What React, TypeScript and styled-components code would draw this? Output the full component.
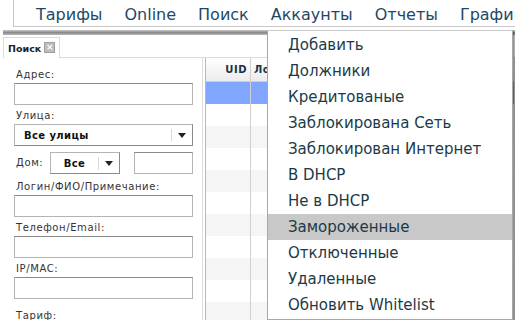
import React from "react";
import styled, { createGlobalStyle } from "styled-components";

const MENU = ["Тарифы", "Online", "Поиск", "Аккаунты", "Отчеты", "Графики"];

const ACCOUNT_ITEMS = [
  "Добавить",
  "Должники",
  "Кредитованые",
  "Заблокирована Сеть",
  "Заблокирован Интернет",
  "В DHCP",
  "Не в DHCP",
  "Замороженные",
  "Отключенные",
  "Удаленные",
  "Обновить Whitelist",
];
const ACTIVE_ITEM = "Замороженные";

const ROWS = 11;

const GlobalStyle = createGlobalStyle`
  body {
    margin: 0;
    background: #fff;
    font-family: "DejaVu Sans", Verdana, sans-serif;
    overflow: hidden;
  }
`;

function App() {
  return (
    <Page>
      <GlobalStyle />
      <Header>
        <TopBar>
          {MENU.map((item) => (
            <TopItem key={item}>{item}</TopItem>
          ))}
        </TopBar>
        <Shade />
      </Header>

      <TabStrip>
        <Tab>
          Поиск
          <CloseBox>×</CloseBox>
        </Tab>
        <TabLine />
      </TabStrip>

      <Body>
        <SearchPanel>
          <Label>Адрес:</Label>
          <Input />
          <Label>Улица:</Label>
          <Select $wide>
            <SelectText>Все улицы</SelectText>
            <Arrow />
          </Select>
          <HouseRow>
            <Label $inline>Дом:</Label>
            <Select>
              <SelectText $center>Все</SelectText>
              <Arrow />
            </Select>
            <SmallInput />
          </HouseRow>
          <Label>Логин/ФИО/Примечание:</Label>
          <Input />
          <Label>Телефон/Email:</Label>
          <Input />
          <Label>IP/MAC:</Label>
          <Input />
          <Label $gap>Тариф:</Label>
        </SearchPanel>

        <Grid>
          <HeadRow>
            <HeadCell>UID</HeadCell>
            <HeadCell>Логин</HeadCell>
          </HeadRow>
          {Array.from({ length: ROWS }).map((_, i) => (
            <Row key={i} $selected={i === 0} $odd={i % 2 === 0}>
              <Cell />
              <Cell />
            </Row>
          ))}
        </Grid>
      </Body>

      <Dropdown>
        {ACCOUNT_ITEMS.map((item) => (
          <DropItem key={item} $active={item === ACTIVE_ITEM}>
            {item}
          </DropItem>
        ))}
      </Dropdown>
    </Page>
  );
}

export default App;

const Page = styled.div`
  position: relative;
  width: 515px;
  height: 320px;
  overflow: hidden;
`;

const Header = styled.div`
  display: flex;
  flex-direction: column;
`;

const TopBar = styled.div`
  display: flex;
  gap: 22px;
  height: 26px;
  margin-left: 13px;
  padding-left: 22px;
  border-left: 1px solid #c4c4c4;
  border-bottom: 1px solid #c8c8c8;
  white-space: nowrap;
  overflow: hidden;
`;

const TopItem = styled.span`
  font-family: "DejaVu Sans", sans-serif;
  font-size: 16px;
  line-height: 30px;
  color: #1e4866;
`;

const Shade = styled.div`
  height: 5px;
  margin: 3px 0 0 3px;
  background: linear-gradient(#c9c9c9, #8a8a8a 50%, #b8b8b8);
`;

const TabStrip = styled.div`
  display: flex;
  align-items: flex-end;
  height: 22px;
  margin-top: 1px;
`;

const Tab = styled.div`
  display: flex;
  align-items: center;
  gap: 3px;
  height: 20px;
  margin-left: 3px;
  padding: 0 4px;
  border: 1px solid #dcdcdc;
  border-bottom: none;
  font-size: 9.5px;
  font-weight: bold;
  color: #15222c;
`;

const CloseBox = styled.span`
  display: inline-flex;
  align-items: center;
  justify-content: center;
  width: 9px;
  height: 9px;
  margin-top: -2px;
  background: #bdbdbd;
  border: 1px solid #a0a0a0;
  color: #fff;
  font-size: 9px;
  line-height: 9px;
`;

const TabLine = styled.div`
  flex: 1;
  border-bottom: 1px solid #dcdcdc;
`;

const Body = styled.div`
  display: flex;
  gap: 2px;
  height: 262px;
`;

const SearchPanel = styled.div`
  display: flex;
  flex-direction: column;
  width: 179px;
  padding: 7px 9px 0 14px;
  border-right: 1px solid #dcdcdc;

  & > * {
    flex-shrink: 0;
  }
`;

const Label = styled.div<{ $inline?: boolean; $gap?: boolean }>`
  font-size: 10px;
  line-height: 12px;
  letter-spacing: 0.6px;
  color: #333;
  margin: ${(p) => (p.$inline ? "0" : p.$gap ? "10px 0 0 2px" : "4px 0 2px 2px")};
  white-space: nowrap;
`;

const Input = styled.div`
  height: 20px;
  border: 1px solid #b4b4b4;
  border-top-color: #8a8a8a;
  margin-bottom: 1px;
`;

const HouseRow = styled.div`
  display: flex;
  align-items: center;
  height: 22px;
  margin: 6px 0 3px 2px;

  & > div:first-child {
    width: 34px;
  }
`;

const Select = styled.div<{ $wide?: boolean }>`
  display: flex;
  align-items: center;
  width: ${(p) => (p.$wide ? "auto" : "68px")};
  height: 20px;
  border: 1px solid #b4b4b4;
  border-right-color: #8a8a8a;
  border-bottom-color: #8a8a8a;
`;

const SelectText = styled.span<{ $center?: boolean }>`
  flex: 1;
  padding-left: ${(p) => (p.$center ? "0" : "9px")};
  text-align: ${(p) => (p.$center ? "center" : "left")};
  font-size: 10px;
  font-weight: bold;
  letter-spacing: 0.4px;
  color: #111;
  border-right: 1px solid #d8d8d8;
  line-height: 13px;
`;

const Arrow = styled.span`
  width: 20px;
  height: 100%;
  display: flex;
  align-items: center;
  justify-content: center;

  &::after {
    content: "";
    border-left: 4px solid transparent;
    border-right: 4px solid transparent;
    border-top: 5px solid #222;
  }
`;

const SmallInput = styled.div`
  width: 57px;
  height: 20px;
  margin-left: 14px;
  border: 1px solid #b4b4b4;
  border-top-color: #8a8a8a;
`;

const Grid = styled.div`
  flex: 1;
  display: flex;
  flex-direction: column;
  border-left: 1px solid #b8b8b8;
`;

const HeadRow = styled.div`
  display: grid;
  grid-template-columns: 45px 1fr;
  height: 23px;
  flex-shrink: 0;
  border-bottom: 1px solid #d0d0d0;
  background: linear-gradient(#fff, #ececec);
`;

const HeadCell = styled.div`
  display: flex;
  align-items: center;
  justify-content: flex-end;
  padding-right: 3px;
  font-size: 10px;
  font-weight: bold;
  letter-spacing: 0.5px;
  color: #1d3247;
  border-right: 1px solid #d0d0d0;

  &:last-child {
    justify-content: flex-start;
    padding-left: 3px;
  }
`;

const Row = styled.div<{ $selected?: boolean; $odd?: boolean }>`
  display: grid;
  grid-template-columns: 45px 1fr;
  height: 22px;
  flex-shrink: 0;
  background: ${(p) => (p.$selected ? "#80a6ff" : p.$odd ? "#f5f5f5" : "#fff")};
`;

const Cell = styled.div`
  border-right: 1px solid #d0d0d0;
`;

const Dropdown = styled.div`
  position: absolute;
  left: 267px;
  top: 30px;
  width: 244px;
  padding: 1px 0;
  background: #fff;
  border: 1px solid #a8a8a8;
  border-top-color: #c8c8c8;
  box-shadow: 2px 2px 2px rgba(0, 0, 0, 0.45);
`;

const DropItem = styled.div<{ $active?: boolean }>`
  height: 26px;
  line-height: 26px;
  padding-left: 20px;
  font-size: 15px;
  color: #1b3a48;
  white-space: nowrap;
  background: ${(p) => (p.$active ? "#c8c8c8" : "transparent")};
`;
